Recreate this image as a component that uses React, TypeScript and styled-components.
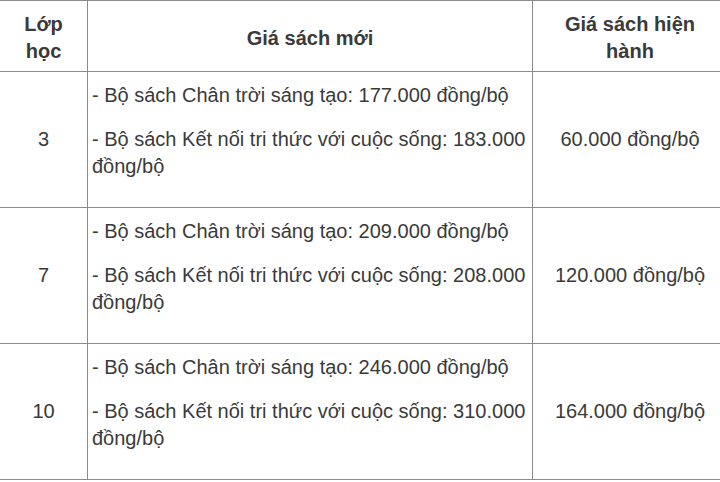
import styled, { createGlobalStyle } from "styled-components";

type Row = { grade: string; items: string[]; current: string };

const rows: Row[] = [
  {
    grade: "3",
    items: [
      "- Bộ sách Chân trời sáng tạo: 177.000 đồng/bộ",
      "- Bộ sách Kết nối tri thức với cuộc sống: 183.000 đồng/bộ",
    ],
    current: "60.000 đồng/bộ",
  },
  {
    grade: "7",
    items: [
      "- Bộ sách Chân trời sáng tạo: 209.000 đồng/bộ",
      "- Bộ sách Kết nối tri thức với cuộc sống: 208.000 đồng/bộ",
    ],
    current: "120.000 đồng/bộ",
  },
  {
    grade: "10",
    items: [
      "- Bộ sách Chân trời sáng tạo: 246.000 đồng/bộ",
      "- Bộ sách Kết nối tri thức với cuộc sống: 310.000 đồng/bộ",
    ],
    current: "164.000 đồng/bộ",
  },
];

const GlobalStyle = createGlobalStyle`
  body {
    margin: 0;
    background: #fff;
    overflow: hidden;
    font-family: "Liberation Sans", Arial, sans-serif;
    color: #3a3a3a;
  }
`;

const App: React.FC = () => {
  return (
    <>
      <GlobalStyle />
      <StyledTable>
        <colgroup>
          <col style={{ width: 88 }} />
          <col style={{ width: 445 }} />
          <col style={{ width: 195 }} />
        </colgroup>
        <thead>
          <tr>
            <StyledHead>
              Lớp
              <br />
              học
            </StyledHead>
            <StyledHead>Giá sách mới</StyledHead>
            <StyledHead>
              Giá sách hiện
              <br />
              hành
            </StyledHead>
          </tr>
        </thead>
        <tbody>
          {rows.map((row) => (
            <tr key={row.grade}>
              <StyledCell $center>{row.grade}</StyledCell>
              <StyledCell>
                {row.items.map((item) => (
                  <p key={item}>{item}</p>
                ))}
              </StyledCell>
              <StyledCell $center>{row.current}</StyledCell>
            </tr>
          ))}
        </tbody>
      </StyledTable>
    </>
  );
};

export default App;

const StyledTable = styled.table`
  border-collapse: collapse;
  table-layout: fixed;
  width: 728px;
  margin: 0 0 0 -1px;
  font-size: 20px;
  line-height: 27px;
`;

const StyledHead = styled.th`
  border: 1px solid #8c8c8c;
  padding: 10px 4px 6px;
  font-weight: bold;
  text-align: center;
  vertical-align: middle;
`;

const StyledCell = styled.td<{ $center?: boolean }>`
  border: 1px solid #8c8c8c;
  padding: 10px 4px;
  text-align: ${({ $center }) => ($center ? "center" : "left")};
  vertical-align: middle;

  p {
    margin: 0 0 17px;
  }
`;
